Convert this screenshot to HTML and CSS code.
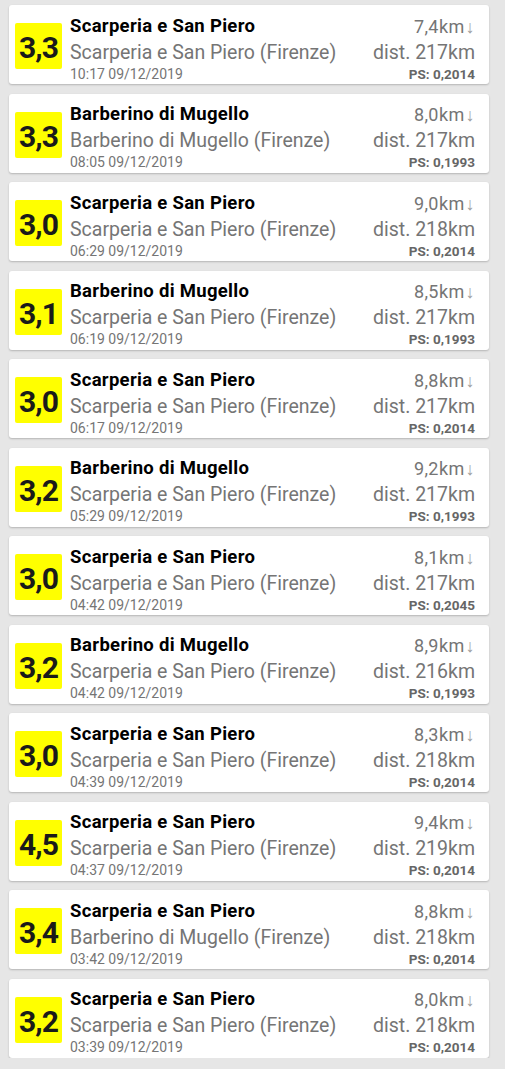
FILE: index.html
```html
<!DOCTYPE html>
<html lang="it">
<head>
    <meta charset="UTF-8">
    <meta name="viewport" content="width=device-width, initial-scale=1.0">
    <title>Terremoti</title>
    <link rel="stylesheet" href="styles.css">
</head>
<body>
    <main class="quake-list">
        <div class="quake">
            <div class="mag">3,3</div>
            <div class="info">
                <span class="place">Scarperia e San Piero</span>
                <span class="depth">7,4km<span class="arrow">↓</span></span>
                <span class="area">Scarperia e San Piero (Firenze)</span>
                <span class="dist">dist. 217km</span>
                <span class="time">10:17 09/12/2019</span>
                <span class="ps">PS: 0,2014</span>
            </div>
        </div>
        <div class="quake">
            <div class="mag">3,3</div>
            <div class="info">
                <span class="place">Barberino di Mugello</span>
                <span class="depth">8,0km<span class="arrow">↓</span></span>
                <span class="area">Barberino di Mugello (Firenze)</span>
                <span class="dist">dist. 217km</span>
                <span class="time">08:05 09/12/2019</span>
                <span class="ps">PS: 0,1993</span>
            </div>
        </div>
        <div class="quake">
            <div class="mag">3,0</div>
            <div class="info">
                <span class="place">Scarperia e San Piero</span>
                <span class="depth">9,0km<span class="arrow">↓</span></span>
                <span class="area">Scarperia e San Piero (Firenze)</span>
                <span class="dist">dist. 218km</span>
                <span class="time">06:29 09/12/2019</span>
                <span class="ps">PS: 0,2014</span>
            </div>
        </div>
        <div class="quake">
            <div class="mag">3,1</div>
            <div class="info">
                <span class="place">Barberino di Mugello</span>
                <span class="depth">8,5km<span class="arrow">↓</span></span>
                <span class="area">Scarperia e San Piero (Firenze)</span>
                <span class="dist">dist. 217km</span>
                <span class="time">06:19 09/12/2019</span>
                <span class="ps">PS: 0,1993</span>
            </div>
        </div>
        <div class="quake">
            <div class="mag">3,0</div>
            <div class="info">
                <span class="place">Scarperia e San Piero</span>
                <span class="depth">8,8km<span class="arrow">↓</span></span>
                <span class="area">Scarperia e San Piero (Firenze)</span>
                <span class="dist">dist. 217km</span>
                <span class="time">06:17 09/12/2019</span>
                <span class="ps">PS: 0,2014</span>
            </div>
        </div>
        <div class="quake">
            <div class="mag">3,2</div>
            <div class="info">
                <span class="place">Barberino di Mugello</span>
                <span class="depth">9,2km<span class="arrow">↓</span></span>
                <span class="area">Scarperia e San Piero (Firenze)</span>
                <span class="dist">dist. 217km</span>
                <span class="time">05:29 09/12/2019</span>
                <span class="ps">PS: 0,1993</span>
            </div>
        </div>
        <div class="quake">
            <div class="mag">3,0</div>
            <div class="info">
                <span class="place">Scarperia e San Piero</span>
                <span class="depth">8,1km<span class="arrow">↓</span></span>
                <span class="area">Scarperia e San Piero (Firenze)</span>
                <span class="dist">dist. 217km</span>
                <span class="time">04:42 09/12/2019</span>
                <span class="ps">PS: 0,2045</span>
            </div>
        </div>
        <div class="quake">
            <div class="mag">3,2</div>
            <div class="info">
                <span class="place">Barberino di Mugello</span>
                <span class="depth">8,9km<span class="arrow">↓</span></span>
                <span class="area">Scarperia e San Piero (Firenze)</span>
                <span class="dist">dist. 216km</span>
                <span class="time">04:42 09/12/2019</span>
                <span class="ps">PS: 0,1993</span>
            </div>
        </div>
        <div class="quake">
            <div class="mag">3,0</div>
            <div class="info">
                <span class="place">Scarperia e San Piero</span>
                <span class="depth">8,3km<span class="arrow">↓</span></span>
                <span class="area">Scarperia e San Piero (Firenze)</span>
                <span class="dist">dist. 218km</span>
                <span class="time">04:39 09/12/2019</span>
                <span class="ps">PS: 0,2014</span>
            </div>
        </div>
        <div class="quake">
            <div class="mag">4,5</div>
            <div class="info">
                <span class="place">Scarperia e San Piero</span>
                <span class="depth">9,4km<span class="arrow">↓</span></span>
                <span class="area">Scarperia e San Piero (Firenze)</span>
                <span class="dist">dist. 219km</span>
                <span class="time">04:37 09/12/2019</span>
                <span class="ps">PS: 0,2014</span>
            </div>
        </div>
        <div class="quake">
            <div class="mag">3,4</div>
            <div class="info">
                <span class="place">Scarperia e San Piero</span>
                <span class="depth">8,8km<span class="arrow">↓</span></span>
                <span class="area">Barberino di Mugello (Firenze)</span>
                <span class="dist">dist. 218km</span>
                <span class="time">03:42 09/12/2019</span>
                <span class="ps">PS: 0,2014</span>
            </div>
        </div>
        <div class="quake">
            <div class="mag">3,2</div>
            <div class="info">
                <span class="place">Scarperia e San Piero</span>
                <span class="depth">8,0km<span class="arrow">↓</span></span>
                <span class="area">Scarperia e San Piero (Firenze)</span>
                <span class="dist">dist. 218km</span>
                <span class="time">03:39 09/12/2019</span>
                <span class="ps">PS: 0,2014</span>
            </div>
        </div>
    </main>
</body>
</html>
```

FILE: styles.css
```css
/* Earthquake list */
:root {
    --bg-color: #e6e6e6;
    --card-color: #fff;
    --mag-color: #ffff00;
    --text-color: #000;
    --muted-color: #757575;
    --ps-color: #666;
}

* {
    margin: 0;
    padding: 0;
    box-sizing: border-box;
}

body {
    font-family: Roboto, 'Liberation Sans', sans-serif;
    color: var(--text-color);
    background-color: var(--bg-color);
    overflow: hidden;
}

.quake-list {
    display: flex;
    flex-direction: column;
    gap: 9.5px;
    padding: 5px 16px 0 9px;
}

.quake {
    display: flex;
    align-items: flex-start;
    gap: 8px;
    height: 79px;
    padding: 8.5px 14px 3.5px 6px;
    background-color: var(--card-color);
    border-radius: 3px;
    box-shadow: 0 1px 2px rgba(0, 0, 0, 0.22);
}

.mag {
    flex: none;
    width: 47px;
    height: 46px;
    margin-top: 9.5px;
    padding-top: 2px;
    border-radius: 2px;
    background-color: var(--mag-color);
    color: #1a1a1a;
    font-size: 30px;
    font-weight: 700;
    line-height: 46px;
    letter-spacing: -1px;
    text-align: center;
}

.info {
    flex: 1;
    display: grid;
    grid-template-columns: 1fr auto;
    grid-template-rows: 25px 28px 14px;
    white-space: nowrap;
}

.place {
    font-size: 18.5px;
    font-weight: 700;
    line-height: 25px;
    letter-spacing: 0.3px;
}

.area {
    font-size: 19.5px;
    line-height: 28px;
    color: var(--muted-color);
}

.time {
    font-size: 14px;
    line-height: 14px;
    color: var(--muted-color);
}

.depth,
.dist,
.ps {
    text-align: right;
    color: var(--muted-color);
}

.depth {
    font-size: 18px;
    line-height: 25px;
    letter-spacing: 0.4px;
}

.depth .arrow {
    color: #a0a0a0;
    margin-left: 1px;
}

.dist {
    font-size: 19.5px;
    line-height: 28px;
}

.ps {
    font-size: 13.5px;
    font-weight: 700;
    line-height: 14px;
    color: var(--ps-color);
}
```
